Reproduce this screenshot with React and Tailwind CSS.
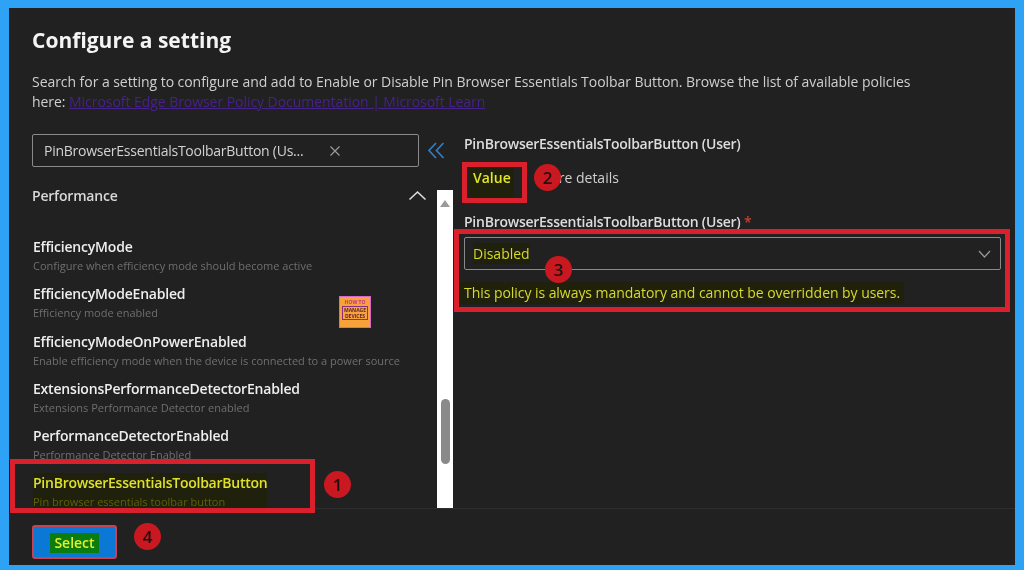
import React from "react";

const FONT = "font-['Open_Sans','Noto_Sans',sans-serif]";

const items = [
  ["EfficiencyMode", "Configure when efficiency mode should become active"],
  ["EfficiencyModeEnabled", "Efficiency mode enabled"],
  ["EfficiencyModeOnPowerEnabled", "Enable efficiency mode when the device is connected to a power source"],
  ["ExtensionsPerformanceDetectorEnabled", "Extensions Performance Detector enabled"],
  ["PerformanceDetectorEnabled", "Performance Detector Enabled"],
];

function Item({ name, sub }) {
  return (
    <div className="h-[47.3px] shrink-0">
      <div className="text-[14px] leading-5 font-semibold text-[#eeeeee] tracking-[-0.2px] whitespace-nowrap">{name}</div>
      <div className="text-[11px] leading-[18px] text-[#6f6f6f] whitespace-nowrap">{sub}</div>
    </div>
  );
}

function Badge({ n, className }) {
  return (
    <div className={`absolute flex h-[27px] w-[27px] items-center justify-center rounded-full bg-[#c9181f] text-[17px] font-semibold text-[#1d1010] ${className}`}>
      {n}
    </div>
  );
}

function Box({ className }) {
  return <div className={`absolute border-[5px] border-[#d9202c] ${className}`} />;
}

export default function App() {
  return (
    <div className={`relative h-[570px] w-[1024px] overflow-hidden bg-[#2ea2f5] pt-2 pr-[9px] pb-[5px] pl-[9px] blur-[0.4px] ${FONT}`}>
      <div className="flex h-full flex-col bg-[#212121]">
        <div className="px-[23px] pt-[18px]">
          <h1 className="text-[21px] leading-7 font-bold text-[#f4f4f4]">Configure a setting</h1>
          <p className="mt-[18px] w-[893px] text-[14px] leading-5 tracking-[-0.05px] text-[#cfcfcf]">
            Search for a setting to configure and add to Enable or Disable Pin Browser Essentials Toolbar Button. Browse the list of available policies here:{" "}
            <span className="text-[#48208c] underline">Microsoft Edge Browser Policy Documentation | Microsoft Learn</span>
          </p>
        </div>

        <div className="mt-[22px] flex min-h-0 flex-1">
          <div className="flex w-[410px] shrink-0 flex-col pl-[23px]">
            <div className="flex h-[33px] shrink-0 items-center rounded-[2px] border border-[#8a8a8a] pl-[11px]">
              <span className="w-[280px] truncate text-[14px] tracking-[-0.25px] text-[#d2d2d2]">PinBrowserEssentialsToolbarButton (Us...</span>
              <svg className="ml-[5px] h-3 w-3 text-[#9a9a9a]" viewBox="0 0 12 12" fill="none" stroke="currentColor" strokeWidth="1.2">
                <path d="M1.5 1.5l9 9M10.5 1.5l-9 9" />
              </svg>
            </div>
            <div className="mt-[18px] -mr-[8px] flex h-5 shrink-0 items-center justify-between">
              <span className="text-[14px] font-semibold tracking-[-0.2px] text-[#d8d8d8]">Performance</span>
              <svg className="h-[11px] w-[19px] text-[#dddddd]" viewBox="0 0 19 11" fill="none" stroke="currentColor" strokeWidth="1.6">
                <path d="M1.5 9.5l8-7.5 8 7.5" />
              </svg>
            </div>
            <div className="mt-[32px] min-h-0 flex-1 overflow-hidden pl-px">
              {items.map(([n, s]) => (
                <Item key={n} name={n} sub={s} />
              ))}
              <div className="w-[234px] bg-[#20210c]">
                <div className="text-[14px] leading-5 font-semibold tracking-[-0.25px] whitespace-nowrap text-[#dfe12a]">PinBrowserEssentialsToolbarButton</div>
                <div className="text-[11px] leading-[18px] text-[#5f6108]">Pin browser essentials toolbar button</div>
              </div>
            </div>
          </div>

          <div className="flex w-[45px] shrink-0 flex-col pl-[18px]">
            <svg className="mt-[8px] -ml-[10px] h-[17px] w-[18px] text-[#2f7fc4]" viewBox="0 0 18 17" fill="none" stroke="currentColor" strokeWidth="1.7">
              <path d="M9 1L2 8.5 9 16M16.5 1L9.5 8.5 16.5 16" />
            </svg>
            <div className="mt-[31px] flex w-4 flex-1 flex-col items-center bg-white pt-[10px]">
              <div className="h-0 w-0 border-x-[5px] border-b-[7px] border-x-transparent border-b-[#9a9a9a]" />
              <div className="mt-[192px] h-[65px] w-[9px] rounded-full bg-[#8a8a8a]" />
            </div>
          </div>

          <div className="min-w-0 flex-1 pr-[14px]">
            <div className="text-[14px] leading-5 font-semibold tracking-[-0.25px] text-[#dddddd]">PinBrowserEssentialsToolbarButton (User)</div>
            <div className="mt-[14px] flex h-5 text-[14px] leading-5">
              <span className="ml-[6px] h-[30px] self-start bg-[#20210c] px-[3px] font-semibold text-[#e3e52b]">Value</span>
              <span className="ml-[24px] text-[#cfcfcf]">More details</span>
            </div>
            <div className="mt-[24px] text-[14px] leading-5 font-semibold tracking-[-0.25px] text-[#dddddd]">
              PinBrowserEssentialsToolbarButton (User) <span className="text-[#c9402f]">*</span>
            </div>
            <div className="mt-[5px] flex h-[33px] items-center justify-between rounded-[2px] border border-[#8a8a8a] pr-[9px] pl-[8px]">
              <span className="bg-[#20210c] text-[14px] text-[#d7d92c]">Disabled</span>
              <svg className="h-2 w-[13px] text-[#9a9a9a]" viewBox="0 0 13 8" fill="none" stroke="currentColor" strokeWidth="1.2">
                <path d="M1 1l5.5 6L12 1" />
              </svg>
            </div>
            <div className="mt-[10px] -ml-[4px]">
              <span className="inline-block bg-[#20210c] px-[4px] text-[14px] leading-[22px] tracking-[-0.05px] text-[#d7d92c]">This policy is always mandatory and cannot be overridden by users.</span>
            </div>
          </div>
        </div>

        <div className="h-[57px] shrink-0 border-t border-[#2e2e2e] pt-[16px] pl-[23px]">
          <button className="flex h-[34px] w-[85px] items-center justify-center rounded-[3px] border-2 border-[#c8424f] bg-[#0b78d6] pt-[1px]">
            <span className="bg-[#0b7d10] px-[4px] text-[14px] leading-5 font-semibold text-[#e4f02c]">Select</span>
          </button>
        </div>
      </div>

      <Box className="top-[459px] left-[10px] h-[54px] w-[305px]" />
      <Box className="top-[162px] left-[462px] h-[41px] w-[65px]" />
      <Box className="top-[229px] left-[454px] h-[83px] w-[556px]" />
      <Badge n="1" className="top-[471px] left-[324px]" />
      <Badge n="2" className="top-[164px] left-[534px]" />
      <Badge n="3" className="top-[256px] left-[545px]" />
      <Badge n="4" className="top-[523px] left-[134px]" />

      <div className="absolute top-[296px] left-[339px] flex h-8 w-8 flex-col items-center gap-[1px] border border-[#d868c8] bg-[#f7a23a] pt-[2px] text-[5px] leading-[6px] font-bold text-[#c2309a]">
        <span>HOW TO</span>
        <div className="flex w-[26px] flex-col items-center border border-[#8a2f80] text-[#5a1f30]">
          <span>MANAGE</span>
          <span>DEVICES</span>
        </div>
      </div>
    </div>
  );
}
